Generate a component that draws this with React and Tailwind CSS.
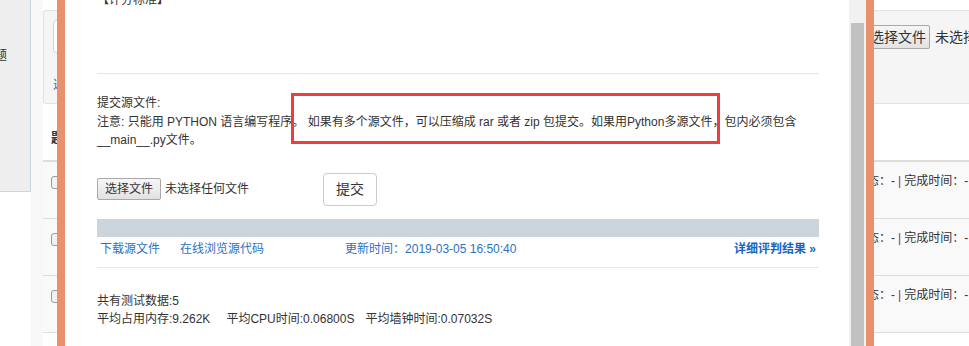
import React from "react";

const rows = [1, 2, 3];

const BackgroundPage = () => (
  <div className="flex h-full w-full">
    {/* left sidebar, cut off by the window edge */}
    <div className="w-[31px] shrink-0 bg-white">
      <div className="h-[192px] bg-[#eeeeee] border-r border-b border-[#c8d5e2] pt-[46px] overflow-hidden">
        <div className="-ml-[6px] text-[13px] leading-[18px] text-[#333]">题</div>
      </div>
    </div>
    <div className="w-[12px] shrink-0 bg-[#f8f8f8]" />

    {/* main column */}
    <div className="w-[1100px] shrink-0 bg-white pt-[10px]">
      <div className="h-[94px] bg-[#f5f5f5] border border-r-0 border-[#e3e3e3] rounded-l-[3px] flex items-start">
        <div className="w-[822px] shrink-0 pl-[9px] pt-[9px]">
          <div className="h-[33px] bg-white border border-[#d5d5d5] rounded-[3px]" />
          <div className="mt-[23px] text-[12px] leading-[18px] text-[#2b72c2]">选项</div>
        </div>
        <div className="pt-[14px] flex items-center text-[14px] text-[#333] whitespace-nowrap">
          <div className="w-[64px] h-[24px] shrink-0 border border-[#a9a9a9] rounded-[2px] bg-gradient-to-b from-[#f6f6f6] to-[#e3e3e3] flex items-center justify-center">
            选择文件
          </div>
          <span className="ml-[5px]">未选择任何文件</span>
        </div>
      </div>
      <div className="h-[56px] pt-[25px]">
        <div className="pl-[8px] text-[13px] font-bold leading-[18px] text-[#333]">题目</div>
      </div>
      <div className="border-t-2 border-[#dddddd]">
        {rows.map((r) => (
          <div
            key={r}
            className="h-[57px] bg-[#f9f9f9] border-b border-[#dddddd] flex items-start text-[12px] text-[#333] whitespace-nowrap"
          >
            <div className="w-[852px] shrink-0 flex items-start justify-between pl-[8px] pt-[14px]">
              <div className="w-[13px] h-[13px] rounded-[3px] border border-[#9a9a9a] bg-[#f2f2f2]" />
              <span className="leading-[10px]">评测状态：-</span>
            </div>
            <span className="pt-[10px] leading-[18px] text-[#8a2b8a] px-[3px]">|</span>
            <span className="pt-[10px] leading-[18px]">完成时间：-</span>
          </div>
        ))}
      </div>
    </div>
  </div>
);

const ResultLayer = () => (
  <div className="absolute left-[57px] top-0 w-[817px] h-[346px] border-x-[8px] border-[#e9916b] bg-white flex">
    <div className="flex-1 pl-[32px] pr-[30px] text-[12px] text-[#333]">
      <div className="-mt-[9px] leading-[18px]">【评分标准】</div>
      <div className="mt-[64px] border-t border-[#e6e6e6]" />

      <div className="relative mt-[20px] leading-[18.5px] whitespace-nowrap">
        <div>提交源文件:</div>
        <div>
          注意: 只能用 PYTHON 语言编写程序。 如果有多个源文件，可以压缩成 rar 或者 zip 包提交。如果用Python多源文件，包内必须包含
        </div>
        <div>__main__.py文件。</div>
        <div className="absolute left-[194px] top-[-1px] w-[429px] h-[51px] border-[3px] border-[#f03c3c]" />
      </div>

      <div className="mt-[23px] flex items-center h-[33px]">
        <div className="w-[226px] flex items-center">
          <div className="w-[64px] h-[22px] border border-[#a9a9a9] rounded-[2px] bg-gradient-to-b from-[#f6f6f6] to-[#e2e2e2] flex items-center justify-center leading-none">
            选择文件
          </div>
          <span className="ml-[4px]">未选择任何文件</span>
        </div>
        <div className="w-[54px] h-[33px] border border-[#cccccc] rounded-[4px] bg-white flex items-center justify-center text-[14px]">
          提交
        </div>
      </div>

      <div className="mt-[13px] h-[18px] bg-[#cdd5dc]" />

      <div className="h-[31px] border-b border-[#e8e8e8] pt-[3px] flex items-start leading-[18px] text-[#2b72c2]">
        <span className="ml-[3px]">下载源文件</span>
        <span className="ml-[20px]">在线浏览源代码</span>
        <span className="ml-[81px]">更新时间：2019-03-05 16:50:40</span>
        <span className="ml-auto mr-[3px] font-bold text-[#1a64bd]">详细评判结果 »</span>
      </div>

      <div className="mt-[24px] leading-[18.5px]">
        <div>共有测试数据:5</div>
        <div className="flex">
          <span className="mr-[16px]">平均占用内存:9.262K</span>
          <span className="mr-[11px]">平均CPU时间:0.06800S</span>
          <span>平均墙钟时间:0.07032S</span>
        </div>
      </div>
    </div>

    <div className="w-[17px] bg-[#f1f1f1] pt-[23px] flex justify-center">
      <div className="w-[13px] bg-[#c1c1c1]" />
    </div>
  </div>
);

export default function App() {
  return (
    <div className="relative w-[969px] h-[346px] overflow-hidden bg-white font-['Liberation_Sans','Noto_Sans_CJK_SC',sans-serif]">
      <BackgroundPage />
      <ResultLayer />
    </div>
  );
}
